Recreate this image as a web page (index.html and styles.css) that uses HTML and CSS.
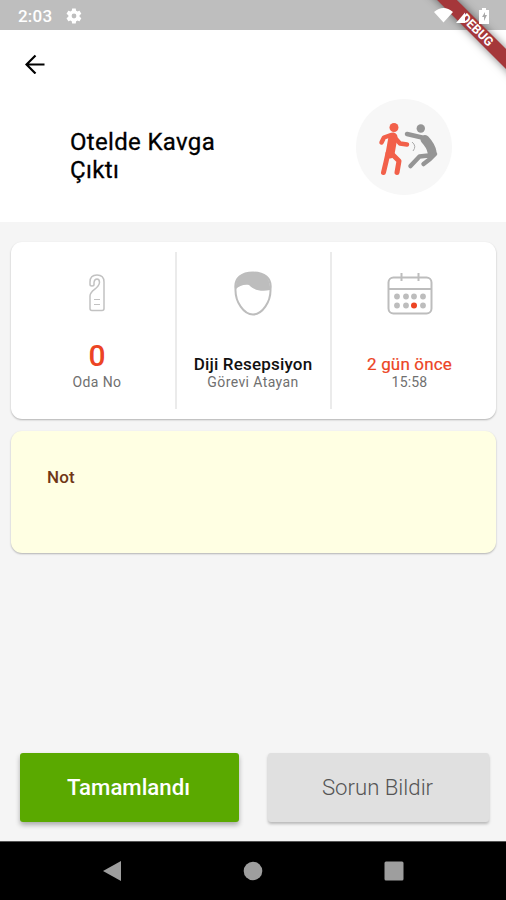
FILE: index.html
```html
<!DOCTYPE html>
<html lang="tr">
<head>
<meta charset="utf-8">
<title>Otelde Kavga Çıktı</title>
<link rel="stylesheet" href="styles.css">
</head>
<body>
<div class="screen">
  <div class="status">
    <span class="clock">2:03</span>
    <svg class="gear" viewBox="0 0 24 24" width="18" height="18"><path fill="#fff" fill-rule="evenodd" d="M19.4 13a7.500 7.500 0 0 0 0-2l2.100-1.600c.2-.2.300-.4.100-.7l-2-3.400c-.1-.2-.4-.3-.6-.2l-2.500 1a7.300 7.300 0 0 0-1.700-1l-.4-2.600c0-.3-.2-.5-.5-.5h-4c-.3 0-.5.2-.5.5L9 5.100a7.300 7.300 0 0 0-1.700 1l-2.500-1c-.2-.1-.5 0-.6.2l-2 3.400c-.1.300-.1.500.1.700L4.500 11a7.500 7.500 0 0 0 0 2l-2.200 1.600c-.2.200-.2.400-.1.700l2 3.400c.1.200.4.300.6.200l2.500-1c.5.400 1.100.8 1.700 1l.4 2.600c0 .3.200.5.500.5h4c.3 0 .5-.2.500-.5l.4-2.600a7.300 7.300 0 0 0 1.700-1l2.500 1c.2.100.5 0 .6-.2l2-3.400c.2-.3.100-.5-.1-.7zM12 15.200a3.200 3.200 0 1 1 0-6.400 3.200 3.200 0 0 1 0 6.400z"/></svg>
    <svg class="signals" viewBox="0 0 60 22" width="60" height="22"><path fill="#fff" d="M0 7Q9.500-1 19 7L9.500 17.500zM22 18L31 7.500V18zM45 5h3V3h4v2h3v14H45z"/><path d="M51 7l-3 5h2v4l3-6h-2z" fill="#aaa"/></svg>
  </div>
  <header>
    <svg class="back" viewBox="0 0 20 20" width="20" height="20"><path d="M19.500 10.500H2M10.500 1.500L1.500 10.500l9 9" fill="none" stroke="#000" stroke-width="2.200"/></svg>
    <div class="hero">
      <h1>Otelde Kavga Çıktı</h1>
      <svg class="fight" viewBox="0 0 96 96" width="96" height="96">
        <circle cx="48" cy="48" r="48" fill="#f7f7f7"/>
        <g fill="none" stroke="#f2604a" stroke-linecap="round" stroke-linejoin="round">
          <path d="M37 38L34 55" stroke-width="9"/>
          <path d="M35 36L28 38.500 25.500 43.500M40 40L44 44.500 51 45.500" stroke-width="4.500"/>
          <path d="M32 54L30 63 27.500 73.500M35 54L43 62 41 73.500" stroke-width="5"/>
        </g>
        <circle cx="38" cy="28.500" r="4.500" fill="#f2604a"/>
        <g fill="none" stroke="#959595" stroke-linecap="round" stroke-linejoin="round">
          <path d="M51 35L66 38.500" stroke-width="4.500"/>
          <path d="M69 40.500Q75 47 76 53" stroke-width="9"/>
          <path d="M77 56L63.500 57.500 54.500 67M79 55L74 60 67.500 65" stroke-width="4.500"/>
        </g>
        <circle cx="64.800" cy="29.500" r="4.200" fill="#959595"/>
        <path d="M56 43Q61 47 57 52" fill="none" stroke="#aaa"/>
      </svg>
    </div>
  </header>
  <main>
    <section class="card info">
      <div class="cell">
        <svg class="tag" viewBox="0 0 16 38" width="16" height="38"><g fill="none" stroke="#c2c2c2" stroke-linejoin="round"><path stroke-width="1.500" d="M1 9V8Q1 1 8 1T15 8V34.500Q15 36.500 13 36.500H3Q1 36.500 1 34.500V22C1 16 10 15 10.500 8.500Q10.500 5 8 5T5 8.500V10.500Q5 12 3 12T1 10.500Z"/><path d="M5 25.500h6M5 30.500h6"/></g></svg>
        <strong class="zero">0</strong>
        <span class="sub room">Oda No</span>
      </div>
      <div class="cell">
        <svg class="face" viewBox="0 0 38 45" width="38" height="45"><path d="M1.500 18C0 7 8 1.500 19 1.500S38 7 36.500 18C37 31 28 43.500 19 43.500S1 31 1.500 18Z" fill="#fff" stroke="#bdbdbd" stroke-width="2"/><path d="M2 18C1 7 8 1.500 19 1.500S37 7 36 19C27 21 20 19 15 14 10 13 5 15 2 18Z" fill="#bdbdbd"/></svg>
        <strong class="name">Diji Resepsiyon</strong>
        <span class="sub by">Görevi Atayan</span>
      </div>
      <div class="cell">
        <svg class="calendar" viewBox="0 0 46 42" width="46" height="42"><g fill="none" stroke="#bdbdbd" stroke-width="2"><rect x="1.500" y="4.500" width="43" height="36" rx="5"/><path d="M2 16h42M14.500 0v8M31.500 0v8"/></g><g fill="#bdbdbd"><circle cx="10" cy="23.500" r="2.900"/><circle cx="19" cy="23.500" r="2.900"/><circle cx="27" cy="23.500" r="2.900"/><circle cx="36" cy="23.500" r="2.900"/><circle cx="10" cy="32.500" r="2.900"/><circle cx="19" cy="32.500" r="2.900"/><circle cx="36" cy="32.500" r="2.900"/></g><circle cx="27" cy="32.500" r="3" fill="#ec4424"/></svg>
        <span class="ago">2 gün önce</span>
        <span class="sub time">15:58</span>
      </div>
    </section>
    <section class="card note"><h2>Not</h2></section>
    <div class="actions">
      <button class="done">Tamamlandı</button>
      <button class="issue">Sorun Bildir</button>
    </div>
  </main>
  <nav>
    <svg viewBox="0 0 20 22" width="20" height="22"><path d="M1 11L19 1V21Z" fill="#9e9e9e"/></svg>
    <svg viewBox="0 0 20 20" width="20" height="20"><circle cx="10" cy="10" r="9.300" fill="#9e9e9e"/></svg>
    <svg viewBox="0 0 20 20" width="20" height="20"><rect x=".5" y=".5" width="19" height="19" rx="1.500" fill="#9e9e9e"/></svg>
  </nav>
  <div class="corner"><div class="ribbon">DEBUG</div></div>
</div>
</body>
</html>
```
FILE: styles.css
```css
* { box-sizing: border-box; }
body { margin: 0; font-family: Roboto, sans-serif; background: #f5f5f5; }
svg { display: block; flex: none; }
.screen { position: relative; width: 506px; height: 900px; display: flex; flex-direction: column; overflow: hidden; }
.status { height: 30px; background: #bebebe; display: flex; align-items: center; padding: 1px 12px 0 18px; flex: none; }
.clock { color: #fff; font-size: 17px; font-weight: 500; letter-spacing: .2px; width: 47px; }
.signals { margin-left: auto; position: relative; z-index: 2; }
header { height: 192px; background: #fff; flex: none; }
.back { margin: 24px 0 0 25px; }
.hero { display: flex; justify-content: space-between; padding: 25px 54px 0 70px; }
h1 { margin: 29px 0 0; width: 180px; font-size: 24px; line-height: 28px; font-weight: 400; letter-spacing: .33px; color: #000; -webkit-text-stroke: .3px #000; }
main { flex: 1; display: flex; flex-direction: column; padding: 20px 10px 19px 11px; background: #f5f5f5; }
.card { border-radius: 11px; background: #fff; box-shadow: 0 1px 2px rgba(0,0,0,.28); }
.info { height: 177px; display: grid; grid-template-columns: 164px 155px 1fr; padding: 10px 0; }
.cell { display: flex; flex-direction: column; align-items: center; white-space: nowrap; }
.cell + .cell { border-left: 2px solid #ebebeb; }
.cell:nth-child(1) { padding-left: 8px; }
.cell:nth-child(2) { padding-right: 1px; }
.cell:nth-child(3) { padding-right: 9px; }
.tag { margin-top: 22px; }
.face { margin-top: 19px; }
.calendar { margin-top: 21px; }
.zero { margin-top: 27px; font-size: 30px; line-height: 34px; font-weight: 500; color: #ec4424; }
.name { margin-top: 38px; font-size: 17px; line-height: 20px; font-weight: 500; letter-spacing: .18px; color: #111; }
.ago { margin-top: 39px; font-size: 17px; line-height: 20px; letter-spacing: .15px; color: #ec4424; -webkit-text-stroke: .2px #ec4424; }
.sub { font-size: 14px; line-height: 16px; letter-spacing: .4px; color: #707070; }
.time { letter-spacing: .2px; }
.room { margin-top: 1px; }
.note { height: 122px; margin-top: 12px; padding: 36px; background: #ffffe3; }
h2 { margin: 0; font-size: 17px; line-height: 20px; font-weight: 500; letter-spacing: .2px; color: #703716; }
.actions { display: grid; grid-template-columns: 219px 221px; gap: 29px; margin: auto 0 0 9px; width: 469px; }
button { height: 69px; border: 0; border-radius: 3px; padding: 0 2px 1px 0; font-family: inherit; font-size: 22.200px; }
.done { background: #5aa900; color: #fff; font-weight: 500; box-shadow: 0 3px 5px rgba(0,0,0,.3); }
.issue { background: #e0e0e0; color: #555; font-weight: 300; box-shadow: 0 2px 3px rgba(0,0,0,.25); }
nav { height: 59px; background: #000; border-top: 1px solid #555; display: flex; align-items: center; gap: 121px; padding-left: 102px; flex: none; }
.corner { position: absolute; top: 0; right: 0; width: 100px; height: 100px; overflow: hidden; }
.ribbon { position: absolute; left: 1px; top: 23px; width: 140px; height: 14px; transform: rotate(45deg); background: #a5373a; box-shadow: 0 0 9px rgba(0,0,0,.5); color: #fff; font-size: 12.500px; line-height: 14px; font-weight: 700; text-align: center; }
```
